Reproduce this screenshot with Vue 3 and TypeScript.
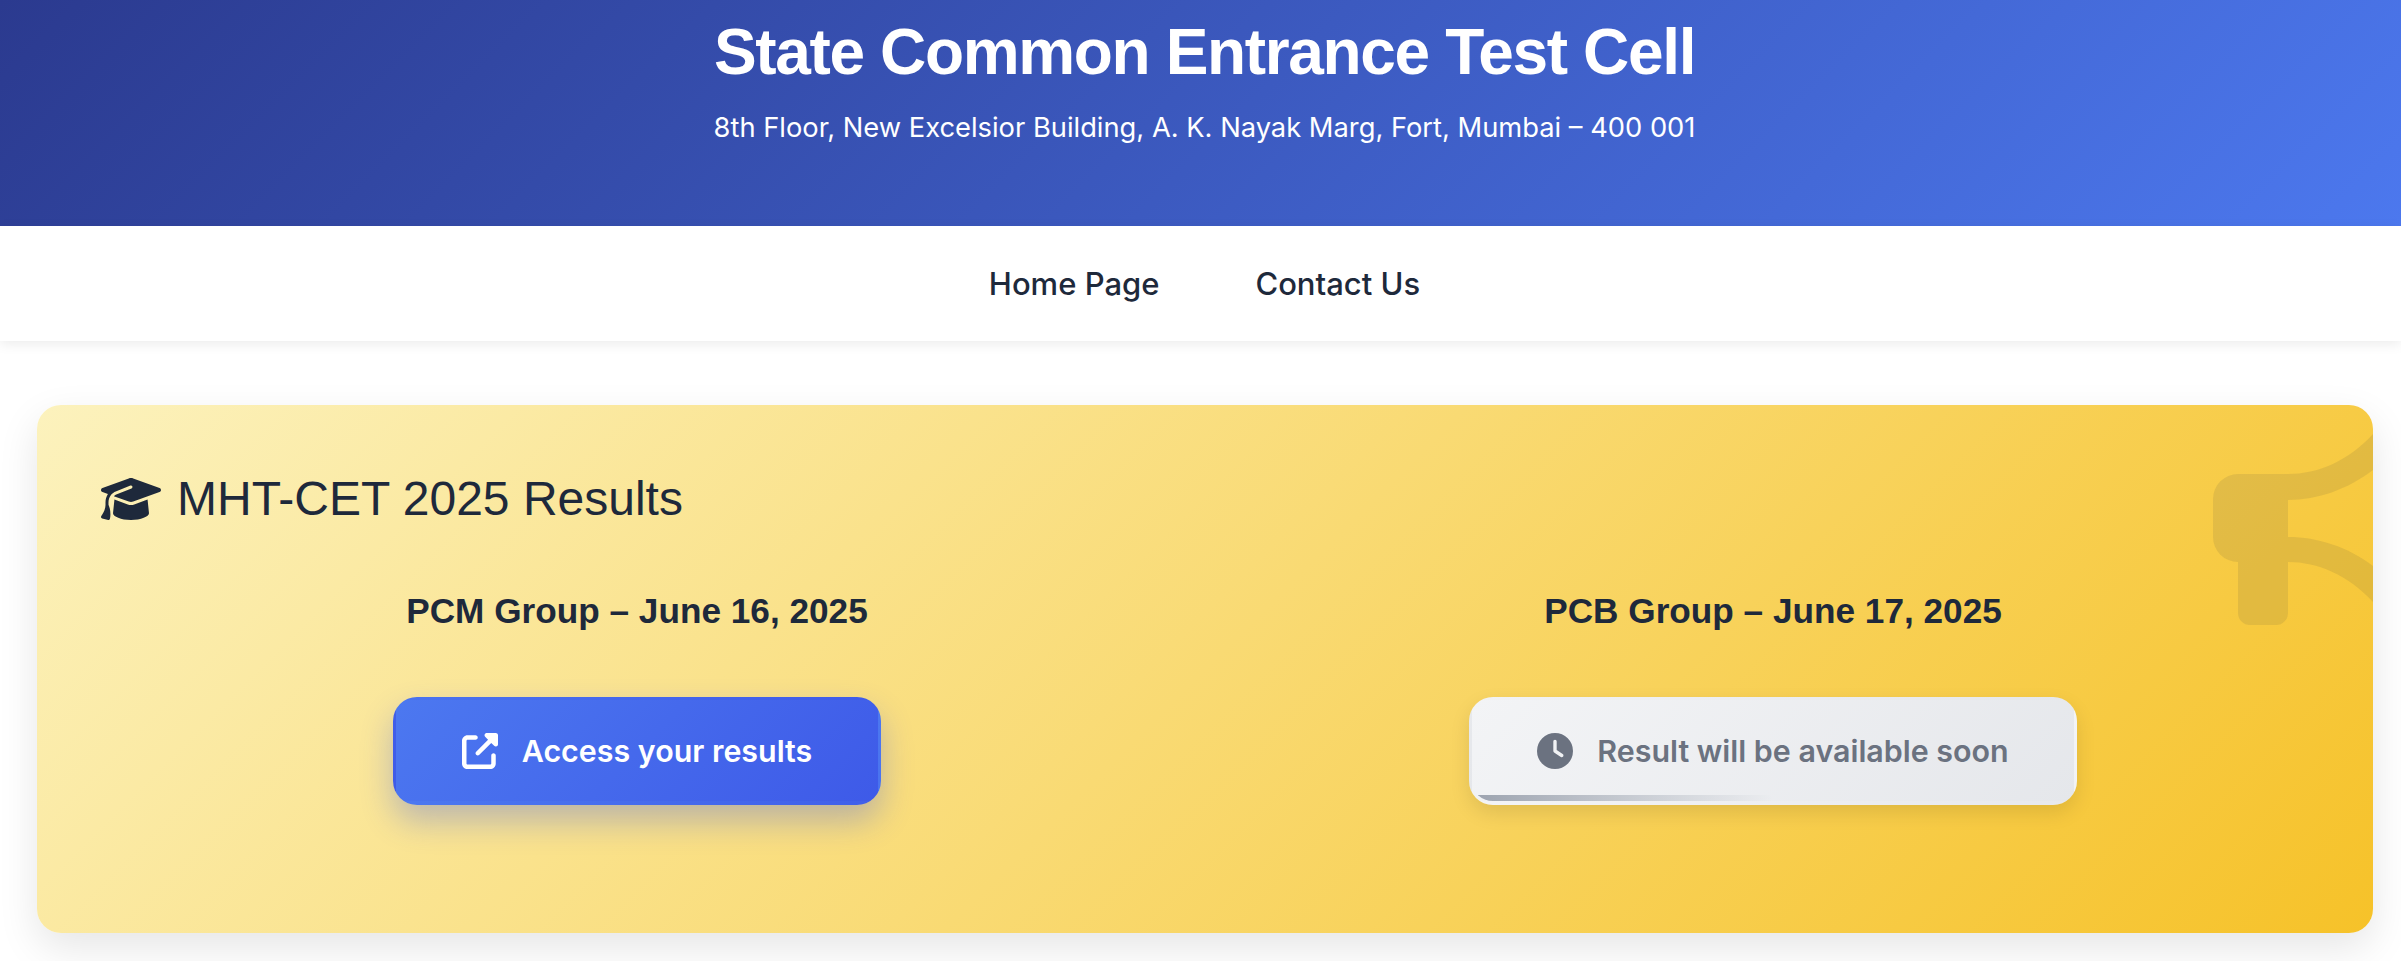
<script setup lang="ts">
const capPath = 'M320 32c-8.1 0-16.1 1.4-23.7 4.1L15.8 137.4C6.3 140.9 0 149.9 0 160s6.3 19.1 15.8 22.6l57.9 20.9C57.3 229.3 48 259.8 48 291.9v28.1c0 28.4-10.8 57.7-22.3 80.8c-6.5 13-13.9 25.8-22.5 37.6C0 442.7-.9 448.3 .9 453.4s6 8.9 11.2 10.2l64 16c4.2 1.1 8.7 .3 12.4-2s6.3-6.1 7.1-10.4c8.6-42.8 4.3-81.2-2.1-108.7C90.3 344.3 86 329.8 80 316.5V291.9c0-30.2 10.2-58.7 27.9-81.5c12.9-15.5 29.6-28 49.2-35.7l157-61.7c8.2-3.2 17.5 .8 20.7 9s-.8 17.5-9 20.7l-157 61.7c-12.4 4.9-23.3 12.4-32.2 21.6l159.6 57.6c7.6 2.7 15.6 4.1 23.7 4.1s16.1-1.4 23.7-4.1L624.2 182.6c9.5-3.4 15.8-12.5 15.8-22.6s-6.3-19.1-15.8-22.6L343.7 36.1C336.1 33.4 328.1 32 320 32zM128 408c0 35.3 86 72 192 72s192-36.7 192-72L496.7 262.6 354.5 314c-11.1 4-22.8 6-34.5 6s-23.5-2-34.5-6L143.3 262.6 128 408z'
const linkPath = 'M352 0c-12.9 0-24.6 7.8-29.6 19.8s-2.2 25.7 6.9 34.9L370.7 96 201.4 265.4c-12.5 12.5-12.5 32.8 0 45.3s32.8 12.5 45.3 0L416 141.3l41.4 41.4c9.2 9.2 22.9 11.9 34.9 6.9s19.8-16.6 19.8-29.6V32c0-17.7-14.3-32-32-32H352zM80 32C35.8 32 0 67.8 0 112V432c0 44.2 35.8 80 80 80H400c44.2 0 80-35.8 80-80V320c0-17.7-14.3-32-32-32s-32 14.3-32 32V432c0 8.8-7.2 16-16 16H80c-8.8 0-16-7.2-16-16V112c0-8.8 7.2-16 16-16H192c17.7 0 32-14.3 32-32s-14.3-32-32-32H80z'
const clockPath = 'M256 0a256 256 0 1 1 0 512A256 256 0 1 1 256 0zM232 120V256c0 8 4 15.5 10.7 20l96 64c11 7.4 25.9 4.4 33.3-6.7s4.4-25.9-6.7-33.3L280 243.2V120c0-13.3-10.7-24-24-24s-24 10.7-24 24z'
</script>

<template>
  <div class="page">
    <header class="hero">
      <h1 class="hero-title">State Common Entrance Test Cell</h1>
      <p class="hero-address">8th Floor, New Excelsior Building, A. K. Nayak Marg, Fort, Mumbai – 400 001</p>
    </header>
    <nav class="nav">
      <a class="nav-link">Home Page</a>
      <a class="nav-link">Contact Us</a>
    </nav>
    <main class="main">
      <section class="card">
        <svg class="watermark" viewBox="0 0 160 192" aria-hidden="true">
          <path d="M25 41 H75 C105 41 135 28 160 1 V37 C135 56 105 67 75 67 V104 C105 104 135 114 160 133 V169 C135 142 105 129 75 129 V180 A12 12 0 0 1 63 192 H37 A12 12 0 0 1 25 180 V129 A25 25 0 0 1 0 104 V66 A25 25 0 0 1 25 41 Z" />
        </svg>
        <h2 class="card-title">
          <svg class="cap" viewBox="0 0 640 512" aria-hidden="true"><path :d="capPath" /></svg>
          <span>MHT-CET 2025 Results</span>
        </h2>
        <div class="groups">
          <div class="group">
            <h3 class="group-title">PCM Group – June 16, 2025</h3>
            <a class="btn btn-active">
              <svg class="btn-icon" viewBox="0 0 512 512" aria-hidden="true"><path :d="linkPath" /></svg>
              <span>Access your results</span>
            </a>
          </div>
          <div class="group">
            <h3 class="group-title">PCB Group – June 17, 2025</h3>
            <div class="btn btn-soon">
              <svg class="btn-icon" viewBox="0 0 512 512" aria-hidden="true"><path :d="clockPath" /></svg>
              <span>Result will be available soon</span>
            </div>
          </div>
        </div>
      </section>
    </main>
  </div>
</template>

<style>
html, body { margin: 0; background: #fff; }
</style>

<style scoped>
.page {
  height: 961px;
  overflow: hidden;
  background: #fff;
  font-family: Inter, "Liberation Sans", sans-serif;
  color: #1e293b;
}
.hero {
  height: 226px;
  box-sizing: border-box;
  padding: 16px 0 0 8px;
  text-align: center;
  color: #fff;
  background: linear-gradient(135deg, #2b3a8f 0%, #4c78ee 100%);
}
.hero-title {
  margin: 0;
  font: 700 64px/72px "Liberation Sans", sans-serif;
  letter-spacing: -1.35px;
}
.hero-address {
  margin: 24px 0 0;
  font: 400 27.3px/32px Inter, sans-serif;
}
.nav {
  height: 115px;
  padding-left: 8px;
  display: flex;
  align-items: center;
  justify-content: center;
  gap: 96px;
  background: #fff;
  box-shadow: 0 3px 12px rgba(0, 0, 0, 0.08);
  position: relative;
}
.nav-link {
  font: 500 31px/36px Inter, sans-serif;
  color: #1e293b;
}
.main {
  padding: 64px 28px 0 37px;
}
.card {
  position: relative;
  height: 528px;
  box-sizing: border-box;
  padding: 64px 64px 0;
  border-radius: 24px;
  background: linear-gradient(135deg, #fcf2bd 0%, #f6c229 100%);
  box-shadow: 0 15px 40px rgba(0, 0, 0, 0.1);
}
.watermark {
  position: absolute;
  right: 0;
  top: 28px;
  width: 160px;
  height: 192px;
  fill: rgba(60, 60, 60, 0.11);
}
.card-title {
  margin: 0;
  display: flex;
  align-items: center;
  gap: 16px;
  font: 400 48px/60px "Liberation Sans", sans-serif;
  color: #1e293b;
}
.cap {
  width: 60px;
  height: 48px;
  fill: #1e293b;
}
.groups {
  display: grid;
  grid-template-columns: 1fr 1fr;
  column-gap: 64px;
  margin-top: 60px;
}
.group {
  display: flex;
  flex-direction: column;
  align-items: center;
}
.group-title {
  margin: 0;
  font: 700 35.2px/44px "Liberation Sans", sans-serif;
  color: #1e293b;
}
.btn {
  margin-top: 64px;
  height: 108px;
  box-sizing: border-box;
  padding: 0 65.5px;
  display: flex;
  align-items: center;
  gap: 24px;
  border-style: solid;
  border-color: transparent;
  border-width: 3px 3px 4px;
  border-radius: 24px;
  font: 600 30.4px/36px Inter, sans-serif;
  position: relative;
  overflow: hidden;
}
.btn-active {
  color: #fff;
  background: linear-gradient(135deg, #4c78f0 0%, #3e5ae8 100%);
  box-shadow: 0 16px 32px rgba(62, 90, 232, 0.33);
}
.btn-soon {
  color: #6b7280;
  background: linear-gradient(135deg, #f3f4f6 0%, #e5e7eb 100%);
  box-shadow: 0 8px 20px rgba(0, 0, 0, 0.1);
}
.btn-soon::after {
  content: "";
  position: absolute;
  left: 0;
  bottom: 0;
  width: 50%;
  height: 6px;
  background: linear-gradient(90deg, #9ca3af, transparent);
}
.btn-icon {
  width: 36px;
  height: 36px;
  fill: currentColor;
}
</style>
